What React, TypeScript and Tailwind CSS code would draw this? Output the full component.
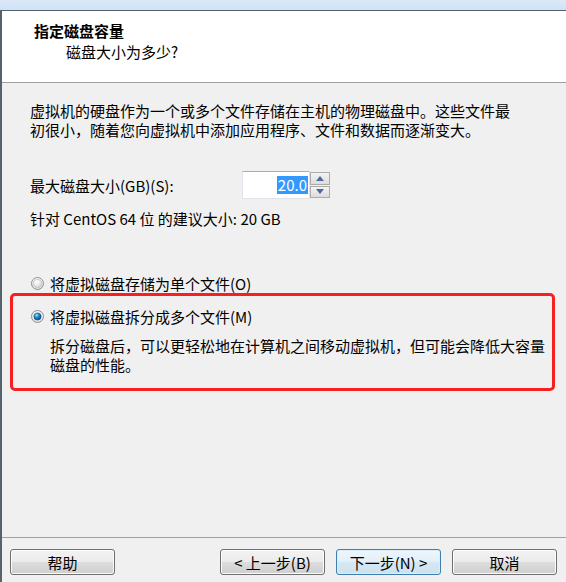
import React from "react";

function Radio({ checked }: { checked: boolean }) {
  return (
    <svg width="13" height="13" viewBox="0 0 13 13" className="shrink-0">
      <defs>
        <radialGradient id="rOff" cx="40%" cy="35%" r="70%">
          <stop offset="0%" stopColor="#ffffff" />
          <stop offset="60%" stopColor="#e6e6e6" />
          <stop offset="100%" stopColor="#c9c9c9" />
        </radialGradient>
        <radialGradient id="rOn" cx="38%" cy="32%" r="70%">
          <stop offset="0%" stopColor="#b8ecff" />
          <stop offset="35%" stopColor="#2a9be0" />
          <stop offset="100%" stopColor="#0a3f78" />
        </radialGradient>
        <linearGradient id="rRim" x1="0" y1="0" x2="0" y2="1">
          <stop offset="0%" stopColor="#f4f4f4" />
          <stop offset="100%" stopColor="#e0e0e0" />
        </linearGradient>
      </defs>
      <circle cx="6.5" cy="6.5" r="6" fill="url(#rRim)" stroke="#8f8f8f" strokeWidth="1" />
      {checked ? (
        <circle cx="6.5" cy="6.5" r="3.6" fill="url(#rOn)" stroke="#1d4f7d" strokeWidth="0.6" />
      ) : (
        <circle cx="6.5" cy="6.5" r="4.2" fill="url(#rOff)" stroke="#bdbdbd" strokeWidth="0.6" />
      )}
    </svg>
  );
}

function Btn({ children, primary }: { children: React.ReactNode; primary?: boolean }) {
  return (
    <div
      className={
        "w-[105px] h-[26px] rounded-[3px] border flex items-center justify-center text-[15px] leading-none text-black " +
        (primary
          ? "border-[#3c7fb1] shadow-[inset_0_0_0_1px_#d8eefb] bg-[linear-gradient(to_bottom,#eef6fb_0%,#e3eff7_50%,#d6e8f3_50%,#cde2ee_100%)]"
          : "border-[#707070] shadow-[inset_0_0_0_1px_#fbfbfb] bg-[linear-gradient(to_bottom,#f2f2f2_0%,#ebebeb_50%,#dddddd_50%,#cfcfcf_100%)]")
      }
    >
      {children}
    </div>
  );
}

export default function App() {
  return (
    <div className="w-[566px] h-[582px] overflow-hidden flex flex-col font-['Noto_Sans_CJK_SC','Noto_Sans',sans-serif] text-black">
      <div className="h-[10px] shrink-0 bg-[linear-gradient(to_bottom,#dbe9f9,#cfe2f6)]" />
      <div className="flex-1 flex flex-col border-l-2 border-t border-[#55636f]">
        {/* header */}
        <div className="h-[72px] shrink-0 bg-white border-b border-[#a0a0a0] pt-[10px]">
          <div className="pl-[32px] text-[15px] leading-[20px] font-bold">指定磁盘容量</div>
          <div className="pl-[64px] mt-[1px] text-[15px] leading-[20px]">磁盘大小为多少?</div>
        </div>
        {/* body */}
        <div className="flex-1 flex flex-col bg-[#f0f0f0]">
          <div className="flex-1 flex flex-col text-[15px] leading-[19px]">
            <div className="pl-[28px] mt-[18px] whitespace-nowrap">
              虚拟机的硬盘作为一个或多个文件存储在主机的物理磁盘中。这些文件最
              <br />
              初很小，随着您向虚拟机中添加应用程序、文件和数据而逐渐变大。
            </div>
            <div className="pl-[28px] mt-[32px] flex items-center h-[28px]">
              <div className="w-[212px] whitespace-nowrap">最大磁盘大小(GB)(S):</div>
              <div className="w-[68px] h-[28px] bg-white border border-[#e2e3ea] border-t-[#abadb3] flex items-center justify-end pr-[1px]">
                <span className="bg-[#3399ff] text-white h-[18px] leading-[18px] px-[1px] text-[15px]">20.0</span>
              </div>
              <div className="flex flex-col w-[20px] h-[28px] gap-[1px] py-[1px]">
                <div className="flex-1 border border-[#acacac] bg-[linear-gradient(to_bottom,#f4f4f4,#dcdcdc)] flex items-center justify-center">
                  <svg width="8" height="5" viewBox="0 0 8 5">
                    <path d="M0 5 L4 0 L8 5 Z" fill="#4e6a9b" />
                  </svg>
                </div>
                <div className="flex-1 border border-[#acacac] bg-[linear-gradient(to_bottom,#f4f4f4,#dcdcdc)] flex items-center justify-center">
                  <svg width="8" height="5" viewBox="0 0 8 5">
                    <path d="M0 0 L8 0 L4 5 Z" fill="#4e6a9b" />
                  </svg>
                </div>
              </div>
            </div>
            <div className="pl-[28px] mt-[10px] whitespace-nowrap">针对 CentOS 64 位 的建议大小: 20 GB</div>
            <div className="pl-[29px] mt-[46px] h-[19px] flex items-center gap-[6px] whitespace-nowrap">
              <Radio checked={false} />
              <span>将虚拟磁盘存储为单个文件(O)</span>
            </div>
            <div className="ml-[8px] w-[545px] border-[3px] border-[#f72020] rounded-[5px] pt-[11px] pb-[14px] pl-[18px]">
              <div className="h-[19px] flex items-center gap-[6px] whitespace-nowrap">
                <Radio checked={true} />
                <span>将虚拟磁盘拆分成多个文件(M)</span>
              </div>
              <div className="mt-[10px] pl-[19px] whitespace-nowrap">
                拆分磁盘后，可以更轻松地在计算机之间移动虚拟机，但可能会降低大容量
                <br />
                磁盘的性能。
              </div>
            </div>
          </div>
          {/* footer */}
          <div className="h-[45px] shrink-0 border-t border-[#a0a0a0] pt-[11px] flex items-start pr-[9px]">
            <div className="ml-[8px]">
              <Btn>帮助</Btn>
            </div>
            <div className="flex-1" />
            <div className="flex gap-[11px]">
              <Btn>&lt; 上一步(B)</Btn>
              <Btn primary>下一步(N) &gt;</Btn>
              <Btn>取消</Btn>
            </div>
          </div>
        </div>
      </div>
    </div>
  );
}
